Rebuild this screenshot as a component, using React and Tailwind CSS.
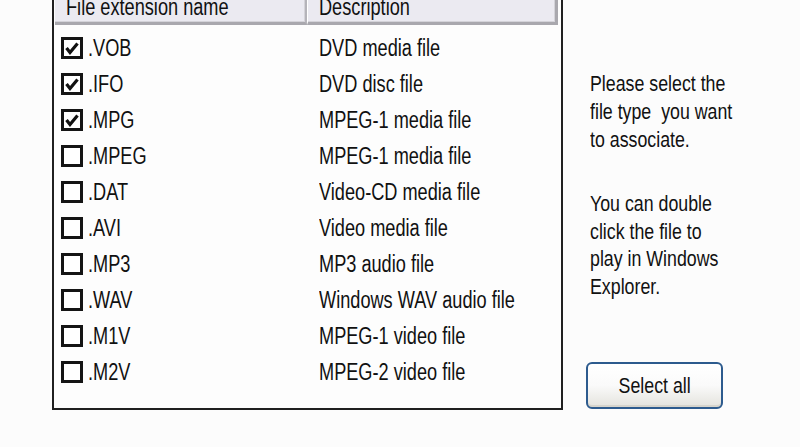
import React from 'react';

const rows = [
    { ext: '.VOB', desc: 'DVD media file', checked: true },
    { ext: '.IFO', desc: 'DVD disc file', checked: true },
    { ext: '.MPG', desc: 'MPEG-1 media file', checked: true },
    { ext: '.MPEG', desc: 'MPEG-1 media file', checked: false },
    { ext: '.DAT', desc: 'Video-CD media file', checked: false },
    { ext: '.AVI', desc: 'Video media file', checked: false },
    { ext: '.MP3', desc: 'MP3 audio file', checked: false },
    { ext: '.WAV', desc: 'Windows WAV audio file', checked: false },
    { ext: '.M1V', desc: 'MPEG-1 video file', checked: false },
    { ext: '.M2V', desc: 'MPEG-2 video file', checked: false },
];

// narrow tall text, like the stretched Tahoma of the dialog
function T({ children }) {
    return (
        <span className="inline-block origin-left scale-x-[0.79] whitespace-nowrap">{children}</span>
    );
}

function CheckBox({ checked }) {
    return (
        <div className="w-[22px] h-[22px] border-[3px] border-[#141414] bg-white flex items-center justify-center shrink-0">
            {checked && (
                <svg width="14" height="13" viewBox="0 0 14 13">
                    <path d="M1.5 6 L5 10.5 L12.5 1.5" fill="none" stroke="#111" strokeWidth="3.2" />
                </svg>
            )}
        </div>
    );
}

export default function App() {
    return (
        <div
            className="w-[800px] h-[447px] overflow-hidden bg-[#fcfcfc] text-[#111] text-[23px] flex"
            style={{ fontFamily: '"Liberation Sans", Arial, sans-serif' }}
        >
            {/* list box */}
            <div className="ml-[52px] -mt-[10px] w-[511px] h-[420px] border-2 border-[#202020] bg-[#fdfdfd] shrink-0 flex flex-col">
                <div className="flex h-[33px] mr-[3px]">
                    <div className="w-[252px] shrink-0 ml-[1px] bg-[#ebeaf1] border-r-2 border-r-[#b5b4ba] border-b-[3px] border-b-[#a9a8ae] shadow-[inset_-1px_-1px_0_#d4d3d9] flex items-end pl-[11px] leading-[29px]">
                        <T>File extension name</T>
                    </div>
                    <div className="flex-1 bg-[#ebeaf1] border-l border-l-white border-r-[3px] border-r-[#a9a8ae] border-b-[3px] border-b-[#a9a8ae] shadow-[inset_-1px_-1px_0_#d4d3d9] flex items-end pl-[11px] leading-[29px]">
                        <T>Description</T>
                    </div>
                </div>
                <div className="pt-[5px]">
                    {rows.map((r) => (
                        <div key={r.ext} className="flex items-center h-[36px] leading-[36px]">
                            <div className="w-[255px] shrink-0 flex items-center pl-[7px] gap-[5px]">
                                <CheckBox checked={r.checked} />
                                <T>{r.ext}</T>
                            </div>
                            <div className="pl-[10px] whitespace-nowrap">
                                <T>{r.desc}</T>
                            </div>
                        </div>
                    ))}
                </div>
            </div>

            {/* side panel */}
            <div className="flex flex-col pl-[23px] pt-[70px]">
                <div className="pl-[4px] leading-[28px] text-[22.5px]">
                    <div><T>Please select the</T></div>
                    <div><T>file type&nbsp; you want</T></div>
                    <div><T>to associate.</T></div>
                </div>
                <div className="pl-[4px] mt-[36px] leading-[27.5px] text-[22.5px]">
                    <div><T>You can double</T></div>
                    <div><T>click the file to</T></div>
                    <div><T>play in Windows</T></div>
                    <div><T>Explorer.</T></div>
                </div>
                <button
                    type="button"
                    className="mt-[62px] w-[137px] h-[47px] rounded-[6px] border-2 border-[#2d5b8e] bg-gradient-to-b from-white via-[#fafafa] to-[#e4e3dd] shadow-[inset_0_-2px_0_#d6d4cc] flex items-center justify-center text-[22.5px]"
                >
                    <span className="inline-block scale-x-[0.79] whitespace-nowrap">Select all</span>
                </button>
            </div>
        </div>
    );
}
